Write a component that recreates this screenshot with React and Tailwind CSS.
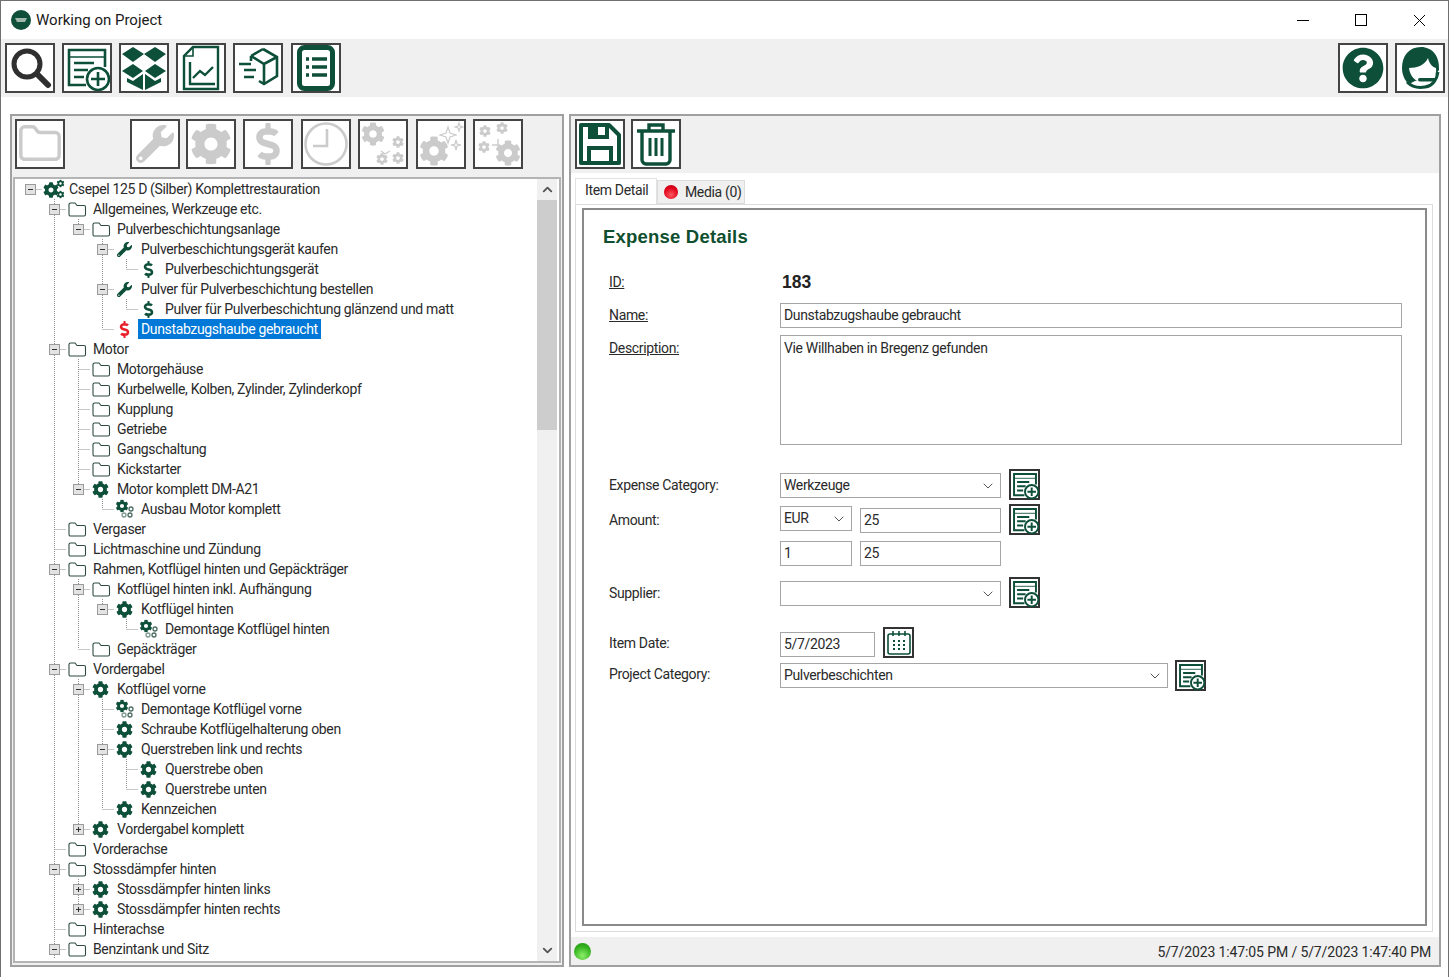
import { ChevronDown, ChevronUp, Folder } from 'lucide-react';
import { FaCog, FaDollarSign, FaWrench, FaQuestionCircle } from 'react-icons/fa';

const GREEN = '#0d4f38';
const GRAY = '#cbcbcb';

// level, icon, label, expander
const TREE = [
  [0, 'gears', 'Csepel 125 D (Silber) Komplettrestauration', '-'],
  [1, 'folder', 'Allgemeines, Werkzeuge etc.', '-'],
  [2, 'folder', 'Pulverbeschichtungsanlage', '-'],
  [3, 'wrench', 'Pulverbeschichtungsgerät kaufen', '-'],
  [4, 'dollar', 'Pulverbeschichtungsgerät'],
  [3, 'wrench', 'Pulver für Pulverbeschichtung bestellen', '-'],
  [4, 'dollar', 'Pulver für Pulverbeschichtung glänzend und matt'],
  [3, 'dollarRed', 'Dunstabzugshaube gebraucht', null, true],
  [1, 'folder', 'Motor', '-'],
  [2, 'folder', 'Motorgehäuse'],
  [2, 'folder', 'Kurbelwelle, Kolben, Zylinder, Zylinderkopf'],
  [2, 'folder', 'Kupplung'],
  [2, 'folder', 'Getriebe'],
  [2, 'folder', 'Gangschaltung'],
  [2, 'folder', 'Kickstarter'],
  [2, 'gear', 'Motor komplett DM-A21', '-'],
  [3, 'subgears', 'Ausbau Motor komplett'],
  [1, 'folder', 'Vergaser'],
  [1, 'folder', 'Lichtmaschine und Zündung'],
  [1, 'folder', 'Rahmen, Kotflügel hinten und Gepäckträger', '-'],
  [2, 'folder', 'Kotflügel hinten inkl. Aufhängung', '-'],
  [3, 'gear', 'Kotflügel hinten', '-'],
  [4, 'subgears', 'Demontage Kotflügel hinten'],
  [2, 'folder', 'Gepäckträger'],
  [1, 'folder', 'Vordergabel', '-'],
  [2, 'gear', 'Kotflügel vorne', '-'],
  [3, 'subgears', 'Demontage Kotflügel vorne'],
  [3, 'gear', 'Schraube Kotflügelhalterung oben'],
  [3, 'gear', 'Querstreben link und rechts', '-'],
  [4, 'gear', 'Querstrebe oben'],
  [4, 'gear', 'Querstrebe unten'],
  [3, 'gear', 'Kennzeichen'],
  [2, 'gear', 'Vordergabel komplett', '+'],
  [1, 'folder', 'Vorderachse'],
  [1, 'folder', 'Stossdämpfer hinten', '-'],
  [2, 'gear', 'Stossdämpfer hinten links', '+'],
  [2, 'gear', 'Stossdämpfer hinten rechts', '+'],
  [1, 'folder', 'Hinterachse'],
  [1, 'folder', 'Benzintank und Sitz', '-'],
];

// does a later row continue the vertical guide of this level?
function continues(i, level) {
  if (level === 0) return false;
  if (i === TREE.length - 1) return level === 1;
  for (let j = i + 1; j < TREE.length; j++) {
    if (TREE[j][0] < level) return false;
    if (TREE[j][0] === level) return true;
  }
  return level === 1;
}

const guide = { stroke: '#8f8f8f', strokeDasharray: '1 1', strokeWidth: 1, fill: 'none' };

function GuideCell({ through, own, root, expander }) {
  return (
    <svg width="24" height="20" className="shrink-0 block">
      {through && <path d="M12.5 0V20" {...guide} />}
      {own && !through && !root && <path d="M12.5 0V10" {...guide} />}
      {own && <path d="M12.5 10.5H24" {...guide} />}
      {expander && (
        <g>
          <rect x="7.5" y="5.5" width="10" height="10" fill="#e3e3e3" stroke="#9a9a9a" />
          <path d="M10 10.5H15" stroke="#333" />
          {expander === '+' && <path d="M12.5 8V13" stroke="#333" />}
        </g>
      )}
    </svg>
  );
}

function Gear({ x, y, r, fill }) {
  return <FaCog x={x - r} y={y - r} size={r * 2} color={fill} />;
}

function TreeIcon({ kind }) {
  if (kind === 'folder') {
    return (
      <svg width="20" height="16" viewBox="0 0 20 16" className="block">
        <path d="M2 3.5C2 2.7 2.7 2 3.5 2H8l2 2.5h7c.8 0 1.5.7 1.5 1.5v7.5c0 .8-.7 1.5-1.5 1.5H3.5C2.7 15 2 14.3 2 13.5Z" fill="#fff" stroke="#2f4a40" strokeWidth="1.1" />
      </svg>
    );
  }
  if (kind === 'gear') return <FaCog size={17} color={GREEN} />;
  if (kind === 'wrench') return <FaWrench size={15} color={GREEN} />;
  if (kind === 'dollar') return <FaDollarSign size={17} color={GREEN} />;
  if (kind === 'dollarRed') return <FaDollarSign size={17} color="#e8202a" />;
  if (kind === 'gears') {
    return (
      <svg width="22" height="20" viewBox="0 0 22 20" className="block">
        <Gear x={8} y={11} r={8} fill={GREEN} />
        <Gear x={17.5} y={4.5} r={4} fill={GREEN} />
        <Gear x={17.5} y={15.5} r={4} fill={GREEN} />
      </svg>
    );
  }
  return (
    <svg width="20" height="20" viewBox="0 0 20 20" className="block">
      <Gear x={7} y={7} r={6.5} fill={GREEN} />
      <circle cx="16" cy="10" r="2" fill="none" stroke="#4b6d60" strokeWidth="1.3" />
      <circle cx="9" cy="16" r="2" fill="none" stroke="#7f9a90" strokeWidth="1.3" />
      <circle cx="15" cy="16" r="2" fill="none" stroke="#4b6d60" strokeWidth="1.3" />
    </svg>
  );
}

function TreeRow({ row, index }) {
  const [level, icon, label, expander, selected] = row;
  const cells = [];
  for (let l = 0; l < level; l++) {
    cells.push(<GuideCell key={l} through={continues(index, l)} />);
  }
  return (
    <div className="flex h-5 items-center whitespace-nowrap">
      {cells}
      <GuideCell own root={level === 0} through={continues(index, level)} expander={expander} />
      <div className={`w-6 h-5 shrink-0 flex items-center justify-center ${level === 0 ? '' : 'pr-[3px]'}`}>
        <TreeIcon kind={icon} />
      </div>
      <span className={`px-[3px] h-5 leading-5 ${selected ? 'bg-[#0078d7] text-white' : ''}`}>{label}</span>
    </div>
  );
}

function ToolButton({ children, className = '' }) {
  return (
    <div className={`w-[50px] h-[50px] shrink-0 bg-white border-2 border-[#444] flex items-center justify-center ${className}`}>
      {children}
    </div>
  );
}

function AddDoc({ size = 46, color = GREEN }) {
  return (
    <svg width={size} height={size} viewBox="0 0 46 46" fill="none" stroke={color} strokeWidth={size < 40 ? 3.2 : 2.6} className="shrink-0">
      <path d="M22 40H5V5h36v17" />
      <path d="M5 12h36" strokeWidth="1.4" />
      <path d="M10 18h20M10 25h14M10 32h10" />
      <circle cx="34" cy="34" r="11" fill="#fff" />
      <path d="M34 27v14M27 34h14" />
    </svg>
  );
}

function BoxStack() {
  return (
    <svg width="46" height="46" viewBox="0 0 46 46" fill={GREEN}>
      <path d="M12 2 23 9 12 17 1 9ZM34 2 45 9 34 17 23 9ZM12 19 22 26 12 33 1 26ZM34 19 45 26 34 33 24 26Z" />
      <path d="M6 33l6 3 10-7v16L6 37ZM40 33l-6 3-10-7v16l16-8Z" />
    </svg>
  );
}

function Report() {
  return (
    <svg width="40" height="46" viewBox="0 0 40 46" fill="none" stroke={GREEN} strokeWidth="2.4">
      <path d="M12 2h25v42H3V11Z" />
      <path d="M12 2v9H3" strokeWidth="1.6" />
      <path d="M9 17v22h25" />
      <path d="M12 33l7-7 5 4 8-8" />
    </svg>
  );
}

function FastBox() {
  return (
    <svg width="44" height="44" viewBox="0 0 44 44" fill="none" stroke={GREEN} strokeWidth="2.6">
      <path d="M27 3l14 8v19l-13 8-5-3" />
      <path d="M15 10l12-7M15 10l13 8 13-7M28 18v20M15 10v5" />
      <path d="M3 18h12M8 24h12M8 31h10" strokeWidth="2.6" />
    </svg>
  );
}

function ListBox() {
  return (
    <svg width="46" height="46" viewBox="0 0 46 46" fill="none" stroke={GREEN}>
      <rect x="6.5" y="2.5" width="33" height="41" rx="5" strokeWidth="5" />
      <path d="M13 14h3M13 22h3M13 30h3M19 14h15M19 22h15M19 30h15" strokeWidth="3.5" />
    </svg>
  );
}

function SearchIcon() {
  return (
    <svg width="44" height="44" viewBox="0 0 44 44" fill="none" stroke="#2f2f2f">
      <circle cx="19" cy="18" r="13" strokeWidth="5" />
      <path d="M29 28l11 11" strokeWidth="6" strokeLinecap="round" />
    </svg>
  );
}

function Headset() {
  return (
    <svg width="46" height="46" viewBox="0 0 46 46">
      <path d="M24 2C12 2 5 11 5 23c0 7 3 13 7 16l6-3 20-6 4-5C43 11 35 2 24 2Z" fill={GREEN} />
      <path d="M12 23c8 0 16-3 19-10 1 5 4 9 8 10 1 8-4 14-13 14-8 0-13-6-14-14Z" fill="#fff" />
      <path d="M41 27c-1 7-5 14-13 15-6 1-13 0-18-5" fill="none" stroke={GREEN} strokeWidth="3" />
      <rect x="21" y="33" width="18" height="3.5" rx="1.7" fill={GREEN} />
    </svg>
  );
}

function SaveIcon() {
  return (
    <svg width="44" height="44" viewBox="0 0 44 44" fill="none" stroke={GREEN} strokeWidth="4">
      <path d="M3 3h28l10 10v28H3Z" strokeLinejoin="round" />
      <path d="M12 3v12h17V3" />
      <path d="M12 3h8v12h-8Z" fill={GREEN} stroke="none" />
      <path d="M11 41V26h22v15" />
    </svg>
  );
}

function TrashIcon() {
  return (
    <svg width="40" height="44" viewBox="0 0 40 44" fill="none" stroke={GREEN} strokeWidth="3.4">
      <path d="M1 9h38M13 9V3h14v6" />
      <path d="M6 9v29c0 2 2 4 4 4h20c2 0 4-2 4-4V9" />
      <path d="M14 16v18M20 16v18M26 16v18" strokeWidth="3" />
    </svg>
  );
}

function ClockIcon() {
  return (
    <svg width="46" height="46" viewBox="0 0 46 46" fill="none" stroke={GRAY} strokeWidth="2.6">
      <circle cx="23" cy="23" r="20.5" />
      <path d="M24 8v17H10" />
    </svg>
  );
}

function GrayGears({ variant }) {
  const c = GRAY;
  if (variant === 'a') {
    return (
      <svg width="46" height="46" viewBox="0 0 46 46">
        <Gear x={13} y={13} r={12} fill={c} />
        <Gear x={38} y={21} r={6} fill={c} />
        <Gear x={22} y={38} r={6} fill={c} />
        <Gear x={38} y={37} r={6} fill={c} />
        <path d="M21 30l4 3 5-3" stroke={c} strokeWidth="1.4" fill="none" />
      </svg>
    );
  }
  if (variant === 'b') {
    return (
      <svg width="46" height="46" viewBox="0 0 46 46">
        <Gear x={16} y={30} r={15} fill={c} />
        <path d="M30 6l2 6 6 2-6 2-2 6-2-6-6-2 6-2ZM41 2l1 3 3 1-3 1-1 3-1-3-3-1 3-1ZM38 19l1 4 4 1-4 1-1 4-1-4-4-1 4-1Z" fill="none" stroke={c} strokeWidth="1.2" />
      </svg>
    );
  }
  return (
    <svg width="46" height="46" viewBox="0 0 46 46">
      <Gear x={10} y={10} r={6} fill={c} />
      <Gear x={27} y={7} r={6} fill={c} />
      <Gear x={9} y={26} r={6} fill={c} />
      <Gear x={33} y={32} r={13} fill={c} />
      <path d="M17 24h6v-6" stroke={c} strokeWidth="1.4" fill="none" />
    </svg>
  );
}

function SmallButton({ children, className = '' }) {
  return (
    <div className={`w-[31px] h-[31px] shrink-0 bg-white border-2 border-[#333] flex items-center justify-center ${className}`}>
      {children}
    </div>
  );
}

function Calendar() {
  return (
    <svg width="26" height="26" viewBox="0 0 26 26" fill="none" stroke={GREEN} strokeWidth="1.6">
      <rect x="2" y="4" width="22" height="20" rx="2" />
      <path d="M7 1v5M13 1v5M19 1v5" />
      <path d="M7 11h2M12 11h2M17 11h2M7 15h2M12 15h2M17 15h2M7 19h2M12 19h2M17 19h2" strokeWidth="2" />
    </svg>
  );
}

function Field({ className = '', children }) {
  return (
    <div className={`h-[25px] shrink-0 bg-white border border-[#a5a5a5] pl-[3px] leading-[23px] whitespace-nowrap overflow-hidden ${className}`}>
      {children}
    </div>
  );
}

function Combo({ className = '', children }) {
  return (
    <div className={`h-[25px] shrink-0 bg-white border border-[#a5a5a5] pl-[3px] pr-[4px] flex items-center justify-between ${className}`}>
      <span>{children}</span>
      <ChevronDown size={16} strokeWidth={1.5} color="#555" />
    </div>
  );
}

function FormRow({ label, className = '', labelClass = '', children }) {
  return (
    <div className={`flex items-center ${className}`}>
      <div className={`w-[171px] shrink-0 ${labelClass}`}>{label}</div>
      {children}
    </div>
  );
}

export default function App() {
  return (
    <div className="w-[1449px] h-[977px] overflow-hidden bg-white border-t border-x border-[#707070] flex flex-col text-[14px] tracking-[-0.35px] text-[#2a2a2a]" style={{ fontFamily: 'Roboto, sans-serif' }}>
      {/* Title bar */}
      <div className="h-[38px] shrink-0 flex items-center pl-[10px]">
        <svg width="20" height="20" viewBox="0 0 20 20" className="shrink-0">
          <circle cx="10" cy="10" r="10" fill={GREEN} />
          <path d="M4 8h12l-2 4H6Z" fill="#9fb8ac" />
        </svg>
        <span className="ml-[5px] text-[15px] tracking-normal text-[#1a1a1a]">Working on Project</span>
        <div className="ml-auto flex items-center">
          <div className="w-[58px] flex justify-center"><div className="w-3 h-px bg-black" /></div>
          <div className="w-[58px] flex justify-center"><div className="w-[12px] h-[12px] border border-black" /></div>
          <div className="w-[58px] flex justify-center">
            <svg width="13" height="13" viewBox="0 0 13 13" stroke="#000"><path d="M1 1l11 11M12 1L1 12" /></svg>
          </div>
        </div>
      </div>

      {/* Main toolbar */}
      <div className="h-[58px] shrink-0 bg-[#f0f0f0] flex items-start pt-[4px] pl-[4px] pr-[3px] gap-[7px]">
        <ToolButton><SearchIcon /></ToolButton>
        <ToolButton><AddDoc /></ToolButton>
        <ToolButton><BoxStack /></ToolButton>
        <ToolButton><Report /></ToolButton>
        <ToolButton><FastBox /></ToolButton>
        <ToolButton className="ml-px"><ListBox /></ToolButton>
        <ToolButton className="ml-auto"><FaQuestionCircle size={42} color={GREEN} /></ToolButton>
        <ToolButton><Headset /></ToolButton>
      </div>

      {/* Panels */}
      <div className="flex-1 min-h-0 flex pt-[17px] pb-[10px] pl-[9px] gap-[5px]">
        {/* Left panel */}
        <div className="w-[554px] shrink-0 border-2 border-[#a0a0a0] bg-[#f0f0f0] flex flex-col">
          <div className="h-[61px] shrink-0 flex items-start pt-[3px] pl-[3px]">
            <ToolButton><Folder size={46} strokeWidth={1.8} color={GRAY} /></ToolButton>
            <ToolButton className="ml-[65px]"><FaWrench size={38} color={GRAY} /></ToolButton>
            <ToolButton className="ml-[6px]"><FaCog size={42} color={GRAY} /></ToolButton>
            <ToolButton className="ml-[7px]"><FaDollarSign size={42} color={GRAY} /></ToolButton>
            <ToolButton className="ml-[8px]"><ClockIcon /></ToolButton>
            <ToolButton className="ml-[7px]"><GrayGears variant="a" /></ToolButton>
            <ToolButton className="ml-[8px]"><GrayGears variant="b" /></ToolButton>
            <ToolButton className="ml-[7px]"><GrayGears variant="c" /></ToolButton>
          </div>
          <div className="flex-1 min-h-0 mx-px mb-[2px] border-2 border-[#b4b4b4] bg-white flex pr-[2px]">
            <div className="flex-1 min-w-0 overflow-hidden pl-[3px]">
              {TREE.map((row, i) => <TreeRow key={i} row={row} index={i} />)}
            </div>
            <div className="w-5 shrink-0 bg-[#f0f0f0] flex flex-col items-center">
              <div className="h-[21px] flex items-center"><ChevronUp size={15} strokeWidth={3} color="#555" /></div>
              <div className="w-full h-[230px] bg-[#cdcdcd]" />
              <div className="mt-auto h-[21px] flex items-center"><ChevronDown size={15} strokeWidth={3} color="#555" /></div>
            </div>
          </div>
        </div>

        {/* Right panel */}
        <div className="w-[872px] shrink-0 border-2 border-[#a0a0a0] bg-[#f0f0f0] flex flex-col">
          <div className="h-[57px] shrink-0 flex items-start pt-[3px] pl-[4px] gap-[6px]">
            <ToolButton><SaveIcon /></ToolButton>
            <ToolButton><TrashIcon /></ToolButton>
          </div>
          <div className="flex-1 min-h-0 flex flex-col bg-white pl-[4px] pr-[6px] pt-[5px] pb-[5px]">
            <div className="h-[26px] shrink-0 flex items-end">
              <div className="w-[82px] h-[26px] bg-white border-t border-x border-[#e2e2e2] pl-[9px] leading-[22px]">Item Detail</div>
              <div className="w-[88px] h-[24px] bg-[#f0f0f0] border border-[#dcdcdc] flex items-center pl-[6px]">
                <div className="w-[14px] h-[14px] rounded-full bg-[radial-gradient(circle_at_50%_70%,#ff5a5f,#e0001a_60%,#b00014)]" />
                <span className="ml-[7px]">Media (0)</span>
              </div>
            </div>
            <div className="flex-1 min-h-0 border border-[#dcdcdc] pt-[3px] pl-[6px] pr-[5px] pb-[5px]">
              <div className="h-full border-2 border-[#8a8a8a] pt-[16px] pl-[19px] pr-[23px]">
                <div className="h-[22px] text-[18.5px] leading-[22px] font-bold tracking-[0.2px] text-[#0f4f2f]" style={{ fontFamily: '"Liberation Sans", sans-serif' }}>Expense Details</div>
                <div className="pl-[6px]">
                  <FormRow label={<u>ID:</u>} className="mt-[23px] h-[22px]">
                    <span className="pl-[2px] text-[17.5px] font-bold tracking-normal text-[#222]" style={{ fontFamily: '"Liberation Sans", sans-serif' }}>183</span>
                  </FormRow>
                  <FormRow label={<u>Name:</u>} className="mt-[10px]">
                    <Field className="flex-1">Dunstabzugshaube gebraucht</Field>
                  </FormRow>
                  <div className="flex mt-[7px]">
                    <div className="w-[171px] shrink-0 pt-[3px]"><u>Description:</u></div>
                    <div className="flex-1 h-[110px] bg-white border border-[#a5a5a5] pl-[3px] pt-[2px]">Vie Willhaben in Bregenz gefunden</div>
                  </div>
                  <FormRow label="Expense Category:" labelClass="pt-[2px]" className="mt-[24px] h-[31px]">
                    <Combo className="w-[221px] self-start mt-[4px]">Werkzeuge</Combo>
                    <SmallButton className="ml-[8px]"><AddDoc size={28} /></SmallButton>
                  </FormRow>
                  <FormRow label="Amount:" labelClass="pt-[2px]" className="mt-[4px] h-[31px]">
                    <Combo className="w-[72px] self-start mt-[2px]">EUR</Combo>
                    <Field className="w-[141px] ml-[8px] self-start mt-[4px]">25</Field>
                    <SmallButton className="ml-[8px]"><AddDoc size={28} /></SmallButton>
                  </FormRow>
                  <FormRow label="" className="mt-[6px]">
                    <Field className="w-[72px]">1</Field>
                    <Field className="w-[141px] ml-[8px]">25</Field>
                  </FormRow>
                  <FormRow label="Supplier:" labelClass="pt-[2px]" className="mt-[11px] h-[31px]">
                    <Combo className="w-[221px] self-start mt-[4px]" />
                    <SmallButton className="ml-[8px]"><AddDoc size={28} /></SmallButton>
                  </FormRow>
                  <FormRow label="Item Date:" labelClass="pt-[2px]" className="mt-[19px] h-[31px]">
                    <Field className="w-[95px] self-start mt-[5px]">5/7/2023</Field>
                    <SmallButton className="ml-[8px]"><Calendar /></SmallButton>
                  </FormRow>
                  <FormRow label="Project Category:" labelClass="pb-[2px]" className="mt-[2px] h-[31px]">
                    <Combo className="w-[388px]">Pulverbeschichten</Combo>
                    <SmallButton className="ml-[7px]"><AddDoc size={28} /></SmallButton>
                  </FormRow>
                </div>
              </div>
            </div>
          </div>
          <div className="h-[28px] shrink-0 flex items-center pl-[3px] pr-[8px]">
            <div className="w-[17px] h-[17px] rounded-full bg-[radial-gradient(circle_at_50%_75%,#8ef06a,#34b21f_60%,#1f8f14)]" />
            <span className="ml-auto pt-[3px] tracking-[-0.12px]">5/7/2023 1:47:05 PM / 5/7/2023 1:47:40 PM</span>
          </div>
        </div>
      </div>
    </div>
  );
}
